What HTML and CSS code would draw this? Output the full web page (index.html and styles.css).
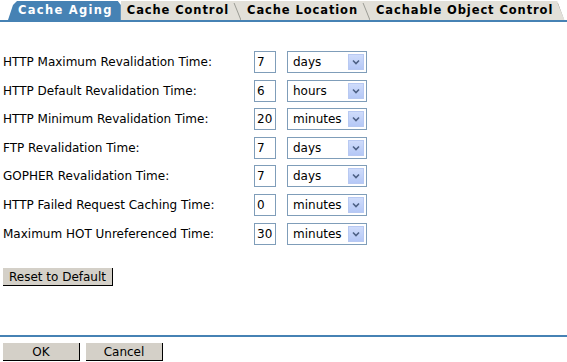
FILE: index.html
```html
<!DOCTYPE html>
<html lang="en">
<head>
    <meta charset="UTF-8">
    <title>Cache Aging</title>
    <link rel="stylesheet" href="styles.css">
</head>
<body>
<div class="tabs">
    <div class="tab active">Cache Aging</div>
    <div class="tab">Cache Control</div>
    <div class="tab">Cache Location</div>
    <div class="tab last">Cachable Object Control</div>
</div>
<form class="settings">
    <div class="row">
        <label>HTTP Maximum Revalidation Time:</label>
        <input type="text" value="7">
        <span class="select"><select><option>days</option></select><span class="arrow"><svg width="8" height="6" viewBox="0 0 8 6"><path d="M1 1.5 L4 4.5 L7 1.5" fill="none" stroke="#4d6185" stroke-width="1.6"/></svg></span></span>
    </div>
    <div class="row">
        <label>HTTP Default Revalidation Time:</label>
        <input type="text" value="6">
        <span class="select"><select><option>hours</option></select><span class="arrow"><svg width="8" height="6" viewBox="0 0 8 6"><path d="M1 1.5 L4 4.5 L7 1.5" fill="none" stroke="#4d6185" stroke-width="1.6"/></svg></span></span>
    </div>
    <div class="row">
        <label>HTTP Minimum Revalidation Time:</label>
        <input type="text" value="20">
        <span class="select"><select><option>minutes</option></select><span class="arrow"><svg width="8" height="6" viewBox="0 0 8 6"><path d="M1 1.5 L4 4.5 L7 1.5" fill="none" stroke="#4d6185" stroke-width="1.6"/></svg></span></span>
    </div>
    <div class="row">
        <label>FTP Revalidation Time:</label>
        <input type="text" value="7">
        <span class="select"><select><option>days</option></select><span class="arrow"><svg width="8" height="6" viewBox="0 0 8 6"><path d="M1 1.5 L4 4.5 L7 1.5" fill="none" stroke="#4d6185" stroke-width="1.6"/></svg></span></span>
    </div>
    <div class="row">
        <label>GOPHER Revalidation Time:</label>
        <input type="text" value="7">
        <span class="select"><select><option>days</option></select><span class="arrow"><svg width="8" height="6" viewBox="0 0 8 6"><path d="M1 1.5 L4 4.5 L7 1.5" fill="none" stroke="#4d6185" stroke-width="1.6"/></svg></span></span>
    </div>
    <div class="row">
        <label>HTTP Failed Request Caching Time:</label>
        <input type="text" value="0">
        <span class="select"><select><option>minutes</option></select><span class="arrow"><svg width="8" height="6" viewBox="0 0 8 6"><path d="M1 1.5 L4 4.5 L7 1.5" fill="none" stroke="#4d6185" stroke-width="1.6"/></svg></span></span>
    </div>
    <div class="row">
        <label>Maximum HOT Unreferenced Time:</label>
        <input type="text" value="30">
        <span class="select"><select><option>minutes</option></select><span class="arrow"><svg width="8" height="6" viewBox="0 0 8 6"><path d="M1 1.5 L4 4.5 L7 1.5" fill="none" stroke="#4d6185" stroke-width="1.6"/></svg></span></span>
    </div>
    <button type="button" class="btn reset">Reset to Default</button>
</form>
<div class="footer">
    <button type="button" class="btn">OK</button>
    <button type="button" class="btn">Cancel</button>
</div>
</body>
</html>
```
FILE: styles.css
```css
* {
    box-sizing: border-box;
}
body {
    margin: 0;
    font-family: "DejaVu Sans", Verdana, sans-serif;
    font-size: 12px;
    color: #000;
    background: #fff;
    width: 567px;
    height: 362px;
    overflow: hidden;
}

/* Tabs */
.tabs {
    display: flex;
    height: 22px;
    padding: 1px 0 0 8px;
    border-bottom: 2px solid #4682b4;
}
.tab {
    position: relative;
    flex: 0 0 auto;
    white-space: nowrap;
    height: 19px;
    line-height: 19px;
    padding: 0 12px 0 6px;
    background: #e2e0d9;
    color: #000;
    font-weight: bold;
    font-size: 11.5px;
    letter-spacing: 0.9px;
}
.tab::after {
    content: "";
    position: absolute;
    right: 3px;
    top: 2px;
    bottom: 0;
    width: 1px;
    background: #9a9a94;
    transform: skewX(22deg);
}
.tab.active {
    background: #4682b4;
    color: #fff;
    padding: 0 8px 0 10px;
    letter-spacing: 1.3px;
    clip-path: polygon(0 100%, 5px 4px, 9px 0, calc(100% - 3px) 0, 100% 4px, 100% 100%);
}
.tab.active::after {
    display: none;
}
.tab.last {
    clip-path: polygon(0 0, calc(100% - 8px) 0, calc(100% - 1px) 100%, 0 100%);
}

/* Form rows */
.settings {
    margin: 0;
    padding: 29px 0 0 3px;
}
.row {
    display: flex;
    align-items: center;
    height: 22px;
    margin-bottom: 6.6px;
}
.row label {
    width: 251px;
}
.row input {
    width: 22px;
    height: 22px;
    margin: 0 11px 0 0;
    padding: 0 2px;
    border: 1px solid #7f9db9;
    font-family: inherit;
    font-size: 12px;
    vertical-align: top;
}
.select {
    position: relative;
    display: inline-block;
    width: 80px;
    height: 22px;
}
.select select {
    appearance: none;
    -webkit-appearance: none;
    width: 100%;
    height: 100%;
    border: 1px solid #7f9db9;
    border-radius: 0;
    background: #fff;
    padding: 0 0 0 5px;
    font-family: inherit;
    font-size: 12px;
    color: #000;
}
.select .arrow {
    position: absolute;
    right: 3px;
    top: 3px;
    width: 16px;
    height: 16px;
    display: flex;
    align-items: center;
    justify-content: center;
    background: linear-gradient(#cfdcfb, #b5c8f6);
    border: 1px solid #b8c9f2;
    pointer-events: none;
}

/* Buttons */
.btn {
    height: 18px;
    padding: 0;
    background: #d4d0c8;
    border: none;
    border-right: 1px solid #000;
    border-bottom: 1px solid #000;
    font-family: inherit;
    font-size: 12px;
    color: #000;
}
.reset {
    width: 110px;
    margin-top: 17px;
}
.footer {
    position: absolute;
    top: 335px;
    left: 0;
    width: 567px;
    display: flex;
    gap: 6px;
    padding: 6px 0 0 3px;
    border-top: 2px solid #4682b4;
}
.footer .btn {
    width: 77px;
}
```
